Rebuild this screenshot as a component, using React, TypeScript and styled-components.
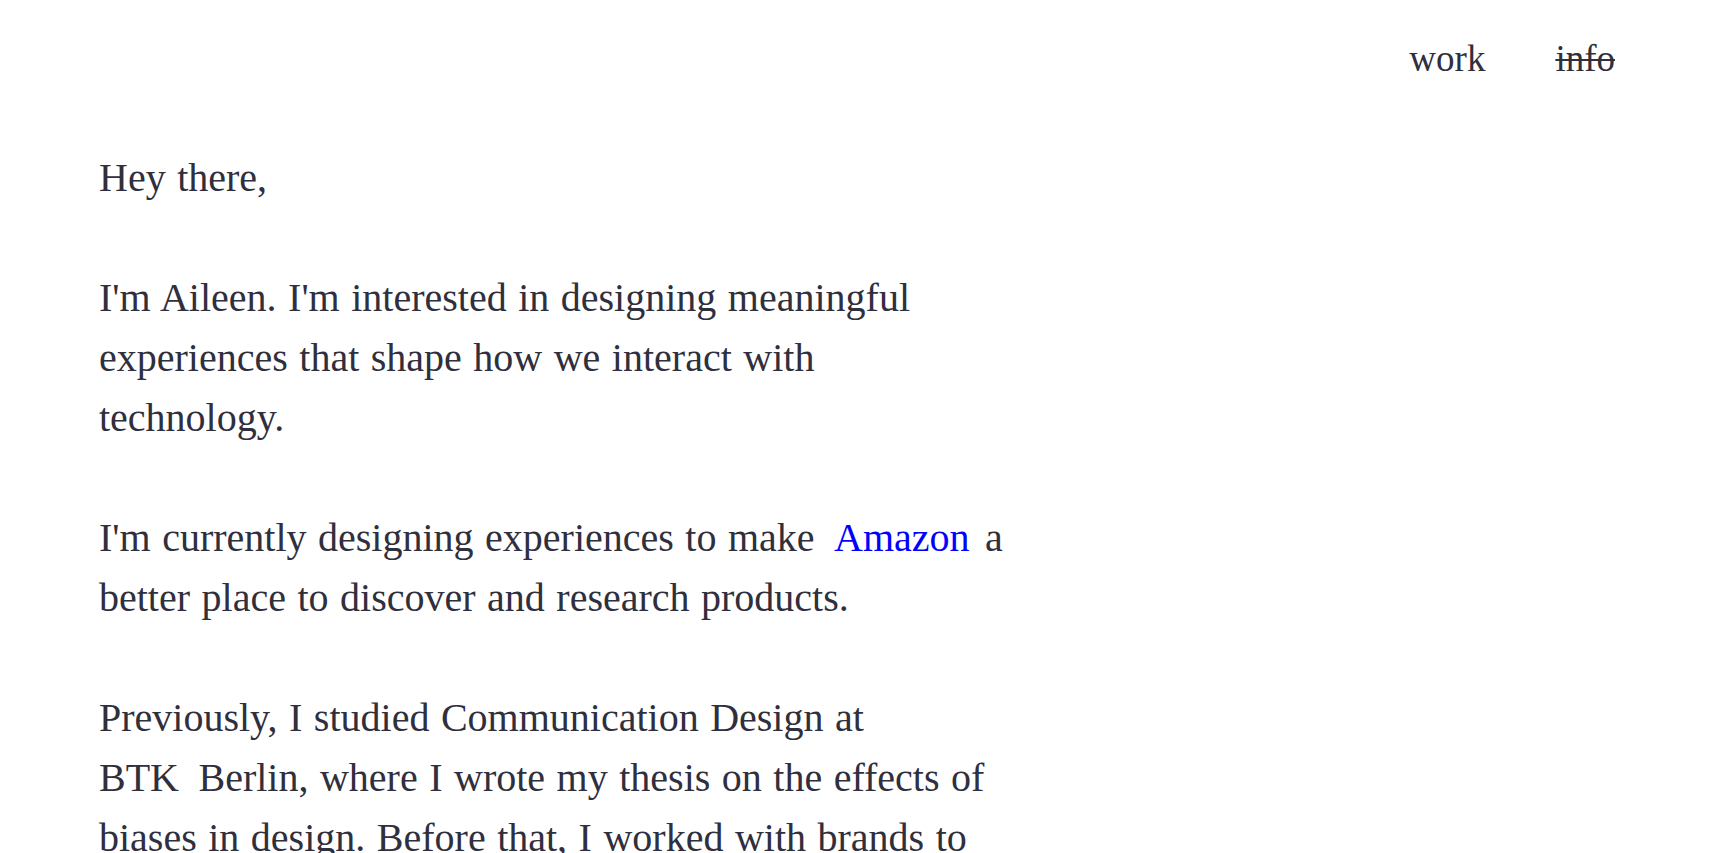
import React from 'react';
import styled, { createGlobalStyle } from 'styled-components';

const GlobalStyle = createGlobalStyle`
  html, body {
    margin: 0;
    padding: 0;
    background: #ffffff;
  }
  body {
    font-family: 'Liberation Serif', 'Times New Roman', serif;
    color: #2f2f3d;
    -webkit-font-smoothing: antialiased;
  }
`;

const Page = styled.div`
  min-height: 100vh;
  padding: 0 110px 80px 99px;
  box-sizing: border-box;
`;

const Header = styled.header`
  display: flex;
  justify-content: flex-end;
  padding-top: 31px;
`;

const Nav = styled.nav`
  display: flex;
  gap: 70px;
`;

const NavItem = styled.a<{ $active?: boolean }>`
  font-size: 37px;
  line-height: 1.5;
  color: #2f2f3d;
  text-decoration: ${(p) => (p.$active ? 'line-through' : 'none')};
  text-decoration-thickness: 2px;
  cursor: pointer;
`;

const Content = styled.main`
  max-width: 905px;
  padding-top: 61px;
`;

const Paragraph = styled.p`
  margin: 0 0 60px;
  font-size: 40px;
  line-height: 60px;
  word-spacing: 1.5px;
`;

const Link = styled.a<{ $plain?: boolean }>`
  color: ${(p) => (p.$plain ? 'inherit' : '#0000ff')};
  text-decoration: none;
  margin: ${(p) => (p.$plain ? '0 8px 0 0' : '0 4px 0 8px')};
`;

const App: React.FC = () => {
  return (
    <Page>
      <GlobalStyle />
      <Header>
        <Nav>
          <NavItem>work</NavItem>
          <NavItem $active>info</NavItem>
        </Nav>
      </Header>
      <Content>
        <Paragraph>Hey there,</Paragraph>
        <Paragraph>
          I'm Aileen. I'm interested in designing meaningful experiences that
          shape how we interact with technology.
        </Paragraph>
        <Paragraph>
          I'm currently designing experiences to make <Link>Amazon</Link> a
          better place to discover and research products.
        </Paragraph>
        <Paragraph>
          Previously, I studied Communication Design at <Link $plain>BTK</Link>
          {'\u00a0'}Berlin, where I wrote my thesis on the effects of biases in
          design. Before that, I worked with brands to communicate their
          stories through visual identities.
        </Paragraph>
      </Content>
    </Page>
  );
};

export default App;
